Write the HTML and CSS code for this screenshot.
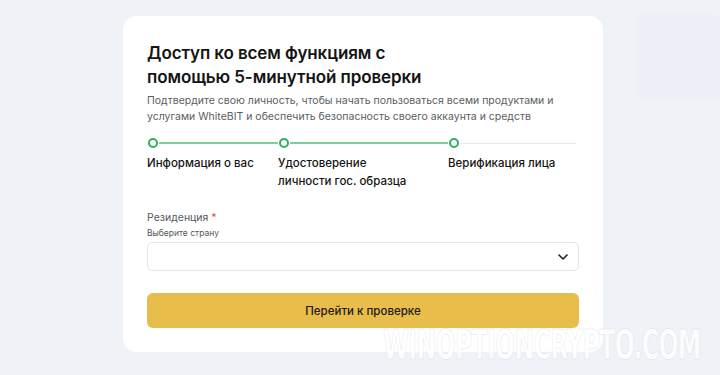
FILE: index.html
```html
<!DOCTYPE html>
<html>
<head>
    <meta charset="UTF-8">
    <title>Верификация</title>
    <link rel="stylesheet" href="styles.css">
</head>
<body>
    <div class="ghost"></div>

    <div class="card">
        <h1>Доступ ко всем функциям с<br>помощью 5-минутной проверки</h1>
        <p class="lead">Подтвердите свою личность, чтобы начать пользоваться всеми продуктами и услугами WhiteBIT и обеспечить безопасность своего аккаунта и средств</p>

        <!-- шаги -->
        <div class="steps">
            <div class="step done">
                <div class="track"><span class="dot"></span><span class="line"></span></div>
                <div class="step-name">Информация о вас</div>
            </div>
            <div class="step done">
                <div class="track"><span class="dot"></span><span class="line"></span></div>
                <div class="step-name">Удостоверение<br>личности гос. образца</div>
            </div>
            <div class="step">
                <div class="track"><span class="dot"></span><span class="line"></span></div>
                <div class="step-name">Верификация лица</div>
            </div>
        </div>

        <label class="field-label">Резиденция <span class="req">*</span></label>
        <div class="field-hint">Выберите страну</div>
        <div class="select">
            <svg width="14" height="14" viewBox="0 0 14 14"><path d="M3 5l4 4 4-4" fill="none" stroke="#1a1a1a" stroke-width="1.6" stroke-linecap="round" stroke-linejoin="round"/></svg>
        </div>

        <button class="btn">Перейти к проверке</button>
    </div>

    <div class="watermark">WINOPTIONCRYPTO.COM</div>
</body>
</html>
```

FILE: styles.css
```css
body {
    font-family: Inter, "Noto Sans", Arial, sans-serif;
    margin: 0;
    padding: 16px 0 0 123px;
    background-color: #eff2f7;
    color: #141414;
    height: 359px;
    overflow: hidden;
    position: relative;
}

.card {
    width: 432px;
    background-color: #fff;
    border-radius: 14px;
    padding: 25px 24px 23px 24px;
    height: 288px;
}

h1 {
    font-size: 17px;
    font-weight: 600;
    line-height: 24px;
    margin: 0 0 4px;
    letter-spacing: -0.1px;
}

.lead {
    font-size: 10.5px;
    line-height: 16px;
    color: #5a5d63;
    margin: 0 0 13px;
}

.steps {
    display: grid;
    grid-template-columns: 131px 170px 1fr;
}

.track {
    display: flex;
    align-items: center;
    height: 10px;
}

.dot {
    width: 6px;
    height: 6px;
    border: 2px solid #2eae5f;
    border-radius: 50%;
    flex: none;
    margin-left: 1px;
}

.line {
    flex: 1;
    height: 1px;
    background-color: #e6e8ec;
    margin-left: 1px;
}

.step:last-child .line {
    margin-right: 3px;
}

.done .line {
    background-color: #7fcf9a;
    height: 1.5px;
}

.step-name {
    font-size: 11.5px;
    font-weight: 500;
    line-height: 18px;
    margin-top: 6px;
}

.field-label {
    display: block;
    margin-top: 20px;
    font-size: 10.5px;
    color: #55585e;
    line-height: 15px;
}

.req {
    color: #e04a4a;
}

.field-hint {
    font-size: 8.5px;
    color: #55585e;
    line-height: 12px;
    margin-top: 2px;
}

.select {
    margin-top: 3px;
    height: 27px;
    border: 1px solid #e3e5e9;
    border-radius: 5px;
    display: flex;
    align-items: center;
    justify-content: flex-end;
    padding-right: 8px;
}

.btn {
    display: block;
    width: 100%;
    margin-top: 22px;
    height: 35px;
    border: none;
    border-radius: 6px;
    background-color: #e9bd4c;
    font-family: Inter, "Noto Sans", Arial, sans-serif;
    font-size: 11.5px;
    font-weight: 500;
    color: #1c1a14;
    cursor: pointer;
}

/* бледный блок справа */
.ghost {
    position: absolute;
    left: 636px;
    top: 14px;
    width: 84px;
    height: 86px;
    background-color: #edf0f6;
    border-radius: 6px;
}

.watermark {
    position: absolute;
    left: 383px;
    top: 323px;
    font-family: "DejaVu Sans Condensed", "Liberation Sans Narrow", sans-serif;
    font-weight: bold;
    font-size: 40px;
    letter-spacing: -1px;
    color: rgba(255, 255, 255, 0.85);
    -webkit-text-stroke: 0.5px rgba(190, 195, 205, 0.5);
    transform: scaleX(0.655);
    transform-origin: left top;
    line-height: 44px;
}
```
